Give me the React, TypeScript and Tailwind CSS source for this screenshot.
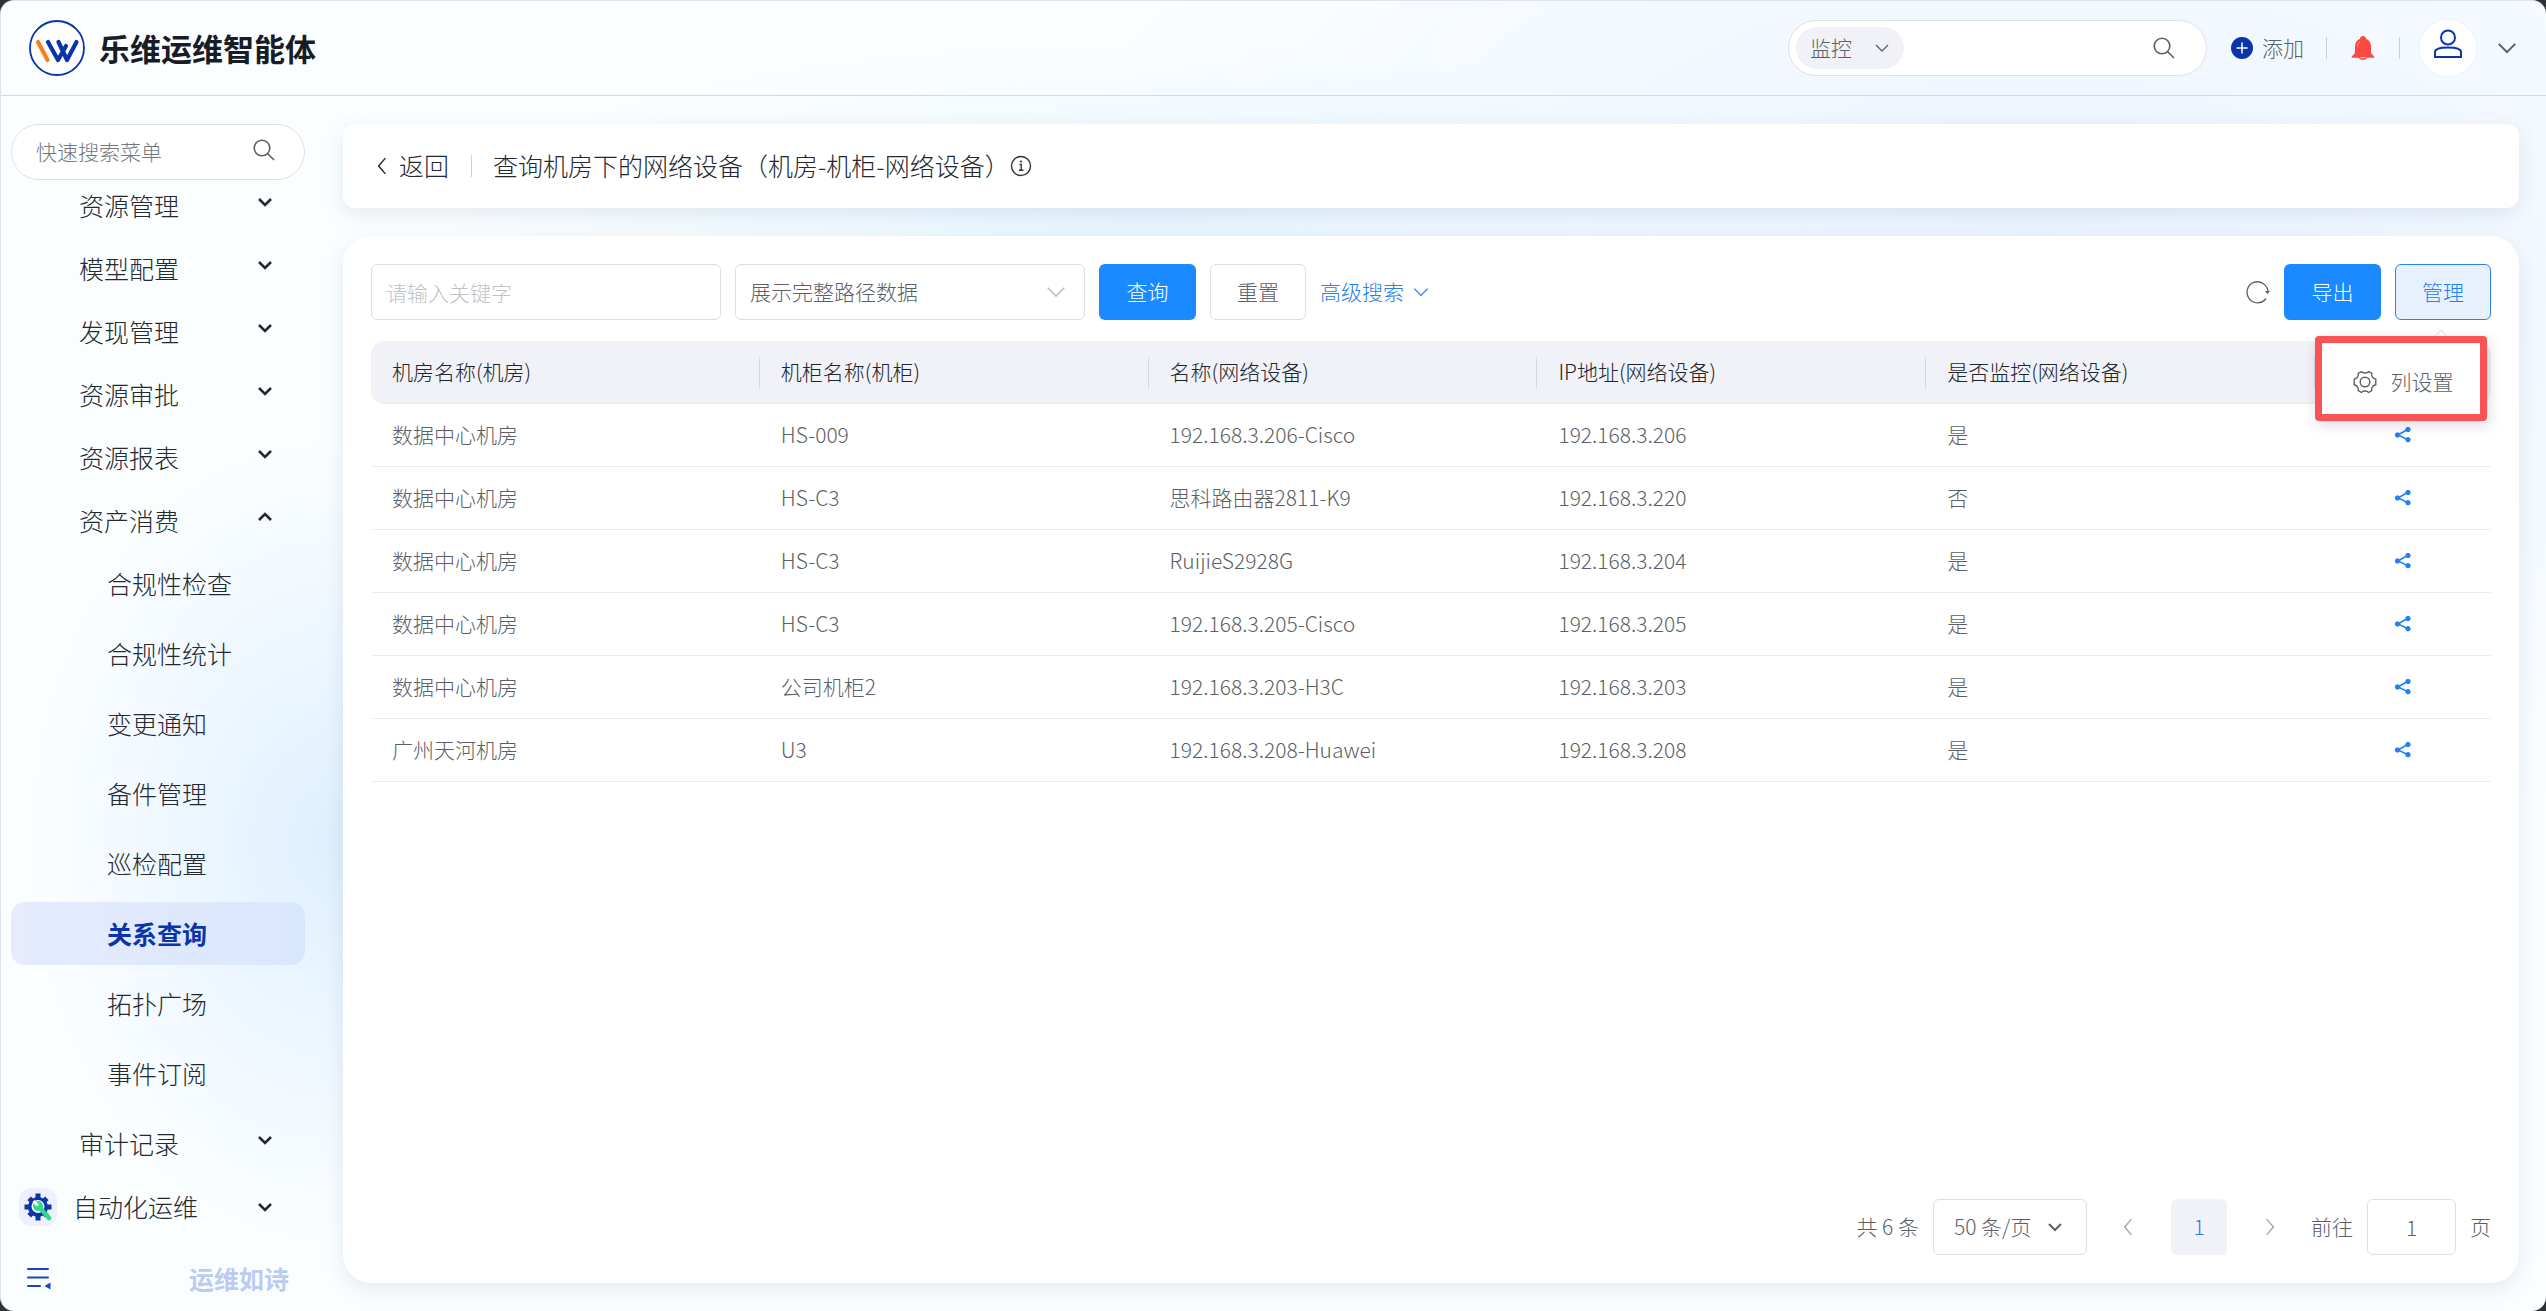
import { ReactNode } from "react";
import { clsx } from "clsx";

const menuGroups = ["资源管理", "模型配置", "发现管理", "资源审批", "资源报表"];

const assetMenu = [
  "合规性检查",
  "合规性统计",
  "变更通知",
  "备件管理",
  "巡检配置",
  "关系查询",
  "拓扑广场",
  "事件订阅",
];

const columns = [
  "机房名称(机房)",
  "机柜名称(机柜)",
  "名称(网络设备)",
  "IP地址(网络设备)",
  "是否监控(网络设备)",
];

const rows = [
  ["数据中心机房", "HS-009", "192.168.3.206-Cisco", "192.168.3.206", "是"],
  ["数据中心机房", "HS-C3", "思科路由器2811-K9", "192.168.3.220", "否"],
  ["数据中心机房", "HS-C3", "RuijieS2928G", "192.168.3.204", "是"],
  ["数据中心机房", "HS-C3", "192.168.3.205-Cisco", "192.168.3.205", "是"],
  ["数据中心机房", "公司机柜2", "192.168.3.203-H3C", "192.168.3.203", "是"],
  ["广州天河机房", "U3", "192.168.3.208-Huawei", "192.168.3.208", "是"],
];

interface ChevronProps {
  direction?: "down" | "up" | "left" | "right";
  className?: string;
  strokeWidth?: number;
}

const chevronPaths = {
  down: "M2 5l6 6 6-6",
  up: "M2 11l6-6 6 6",
  left: "M11 1L5 8l6 7",
  right: "M5 1l6 7-6 7",
};

const Chevron = ({
  direction = "down",
  className,
  strokeWidth = 1.5,
}: ChevronProps) => (
  <svg
    viewBox="0 0 16 16"
    fill="none"
    stroke="currentColor"
    strokeWidth={strokeWidth}
    className={clsx("shrink-0", className)}
  >
    <path d={chevronPaths[direction]} />
  </svg>
);

const SearchIcon = () => (
  <svg
    viewBox="0 0 24 24"
    fill="none"
    stroke="currentColor"
    strokeWidth="1.6"
    className="size-6"
  >
    <circle cx="10" cy="10" r="7.8" />
    <path d="M15.5 15.5L22 22" />
  </svg>
);

const Logo = () => (
  <svg viewBox="0 0 56 56" fill="none" className="size-14">
    <circle cx="28" cy="28" r="27" fill="#fff" stroke="#0a35a8" strokeWidth="1.8" />
    <g strokeWidth="4.2" strokeLinecap="round" strokeLinejoin="round">
      <path d="M9 22l9.500 18" stroke="#fb7f22" />
      <path d="M19 22l10 18L37 26M29.500 22l8.500 18L47.500 22" stroke="#0a35a8" />
    </g>
  </svg>
);

const BellIcon = () => (
  <svg viewBox="0 0 24 24" className="size-6">
    <path
      d="M12 0a3 3 0 0 1 3 2.700c3.400 1.200 5 4.300 5 8v5.300c0 1.500 1.200 2.300 2.500 3.700.8.900 1 2 1 2H.5s.2-1.100 1-2C2.800 18.300 4 17.500 4 16v-5.300c0-3.700 1.600-6.800 5-8A3 3 0 0 1 12 0z"
      fill="#fb4a40"
    />
    <path d="M8 21h8a4 3 0 0 1-8 0z" fill="#fb4a40" />
    <path d="M9.500 21.700h5" stroke="#fff" strokeWidth="0.900" />
    <path d="M6.700 10c.1-2 .9-3.200 2.400-4" fill="none" stroke="#fda49e" />
  </svg>
);

const UserIcon = () => (
  <svg
    viewBox="0 0 30 30"
    fill="none"
    stroke="#0a35a8"
    strokeWidth="2"
    className="mb-2 size-[30px]"
  >
    <circle cx="15" cy="8.500" r="7" />
    <path d="M2 28v-5c0-3.500 6-4.500 13-4.500s13 1 13 4.500v5z" />
  </svg>
);

const RefreshIcon = () => (
  <svg
    viewBox="0 0 24 24"
    fill="none"
    stroke="currentColor"
    strokeWidth="1.300"
    className="size-6"
  >
    <path d="M20 18.500A10.500 10.500 0 1 1 22 11.500" />
    <path d="M19 11h5l-2.500 3z" fill="currentColor" stroke="none" />
  </svg>
);

const InfoIcon = () => (
  <svg viewBox="0 0 22 22" fill="none" stroke="#303339" className="size-[22px]">
    <circle cx="11" cy="11" r="9.500" strokeWidth="1.400" />
    <path d="M9.500 9.500h1.700v5.500M9 15.300h4.500" strokeWidth="1.400" />
    <circle cx="11" cy="6.500" r="0.700" fill="#303339" />
  </svg>
);

const ShareIcon = () => (
  <svg viewBox="0 0 18 18" fill="#2080f5" stroke="#2080f5" className="size-[18px]">
    <path d="M13.500 3.500L4 9l9.500 4.500" fill="none" strokeWidth="1.500" />
    <circle cx="14" cy="3.500" r="2.200" />
    <circle cx="3.500" cy="9" r="2.200" />
    <circle cx="14" cy="13.700" r="2.200" />
  </svg>
);

const GearIcon = () => (
  <svg
    viewBox="0 0 24 24"
    fill="none"
    stroke="#5c5f66"
    strokeWidth="1.400"
    strokeLinejoin="round"
    className="size-6"
  >
    <path d="M8.500 1.500C9.500 3.500 14.500 3.500 15.500 1.500L18.800 3.400C18 5.600 19.800 8.800 22.800 9.300V14.700C19.800 15.200 18 18.400 18.800 20.600L15.500 22.500C14.500 20.500 9.500 20.500 8.500 22.500L5.200 20.600C6 18.400 4.200 15.200 1.200 14.700V9.300C4.200 8.800 6 5.600 5.200 3.400z" />
    <circle cx="12" cy="12" r="4.800" />
  </svg>
);

const AutomationIcon = () => (
  <span className="flex size-[38px] items-center justify-center rounded-xl bg-[#eef1fd]">
    <svg viewBox="0 0 28 28" className="size-7">
      <g fill="#0a35a8">
        <circle cx="14" cy="14" r="10" />
        <rect x="11.500" y="0.500" width="5" height="27" />
        <rect x="0.500" y="11.500" width="27" height="5" />
        <rect x="11.500" y="1.500" width="5" height="25" transform="rotate(45 14 14)" />
        <rect x="11.500" y="1.500" width="5" height="25" transform="rotate(-45 14 14)" />
      </g>
      <circle cx="14" cy="13.500" r="6.500" fill="#fff" />
      <path
        d="M16.500 15.500l8.500 9.500"
        stroke="#2edc86"
        strokeWidth="4.500"
        strokeLinecap="round"
      />
      <circle cx="14" cy="13" r="5" fill="#2edc86" />
      <path d="M9.500 8l4.500 4.500" stroke="#fff" strokeWidth="3" />
    </svg>
  </span>
);

const CollapseIcon = () => (
  <svg
    viewBox="0 0 24 24"
    fill="none"
    stroke="#1745c4"
    strokeWidth="2"
    strokeLinecap="round"
    className="size-6"
  >
    <path d="M1 3h20M1 11.500h20M1 20h12" />
    <path d="M23.500 16.500v7L17.500 20z" fill="#1745c4" stroke="none" />
  </svg>
);

const Header = () => (
  <header className="flex h-[95px] shrink-0 items-center justify-between border-b border-[#d3d9de] px-7">
    <div className="flex items-center gap-3.5">
      <Logo />
      <h1 className="text-[31px] font-bold text-[#171c26]">乐维运维智能体</h1>
    </div>
    <div className="flex items-center">
      <div className="flex h-14 w-[419px] items-center rounded-full border border-[#dfe1e5] bg-white pr-[30px] pl-[7px]">
        <div className="relative flex items-center">
          <select
            aria-label="搜索范围"
            className="h-[42px] w-[108px] appearance-none rounded-full bg-[#f0f2f7] pl-3.5 text-[#5c5f66]"
          >
            <option>监控</option>
          </select>
          <Chevron className="pointer-events-none absolute right-3.5 size-4" strokeWidth={1.3} />
        </div>
        <input aria-label="搜索" className="min-w-0 flex-1 bg-transparent px-3 outline-none" />
        <button type="button" aria-label="搜索按钮">
          <SearchIcon />
        </button>
      </div>
      <button type="button" className="ml-6 flex items-center gap-[9px]">
        <svg viewBox="0 0 22 22" className="size-[22px]">
          <circle cx="11" cy="11" r="11" fill="#0a35a8" />
          <path d="M5.500 11h11M11 5.500v11" stroke="#fff" strokeWidth="1.500" />
        </svg>
        添加
      </button>
      <span className="ml-[22px] h-[22px] w-px bg-[#cdd1d6]" />
      <button type="button" aria-label="告警" className="mx-6">
        <BellIcon />
      </button>
      <span className="h-[22px] w-px bg-[#cdd1d6]" />
      <button
        type="button"
        aria-label="用户"
        className="ml-5 flex size-14 items-center justify-center rounded-full bg-white shadow-[0_0_3px_#eef0f4]"
      >
        <UserIcon />
      </button>
      <Chevron className="ml-5 size-[22px]" strokeWidth={1.5} />
    </div>
  </header>
);

interface MenuRowProps {
  label: string;
  open?: boolean;
  icon?: ReactNode;
}

const MenuRow = ({ label, open, icon }: MenuRowProps) => (
  <li>
    <button
      type="button"
      className={clsx(
        "flex h-[63px] w-full items-center pr-8 text-[25px] text-[#24282f]",
        icon ? "gap-4 pl-2" : "pl-[68px]"
      )}
    >
      {icon}
      <span className="flex-1 text-left">{label}</span>
      <Chevron
        direction={open ? "up" : "down"}
        strokeWidth={2.6}
        className={clsx("size-4", !icon && "mb-2")}
      />
    </button>
  </li>
);

const Sidebar = () => (
  <aside className="flex w-[304px] shrink-0 flex-col pl-2.5">
    <div className="mt-7 flex h-14 shrink-0 items-center rounded-full border border-[#dfe1e5] bg-white pr-7 pl-6">
      <input
        aria-label="快速搜索菜单"
        placeholder="快速搜索菜单"
        className="min-w-0 flex-1 bg-transparent outline-none placeholder:text-[#75777b]"
      />
      <button type="button" aria-label="搜索菜单" className="mb-1">
        <SearchIcon />
      </button>
    </div>
    <nav className="-mt-1.5">
      <ul>
        {menuGroups.map((label) => (
          <MenuRow key={label} label={label} />
        ))}
        <MenuRow label="资产消费" open />
        {assetMenu.map((label) => (
          <li key={label} className="mb-[7px]">
            <a
              href="#"
              className={clsx(
                "flex h-[63px] items-center rounded-[14px] pl-24 text-[25px]",
                label === "关系查询"
                  ? "bg-linear-to-r from-[#e6ebfd] to-[#d9e7fe] font-bold text-[#0a35a8]"
                  : "text-[#24282f]"
              )}
            >
              {label}
            </a>
          </li>
        ))}
        <MenuRow label="审计记录" />
        <MenuRow label="自动化运维" icon={<AutomationIcon />} />
      </ul>
    </nav>
    <div className="mt-auto mb-3.5 flex items-center justify-between pr-4 pl-4">
      <button type="button" aria-label="收起菜单">
        <CollapseIcon />
      </button>
      <span className="text-[25px] font-bold text-[#bccbf2]">运维如诗</span>
    </div>
  </aside>
);

const Toolbar = () => (
  <div className="flex items-center">
    <input
      aria-label="关键字"
      placeholder="请输入关键字"
      className="h-14 w-[350px] rounded-md border border-[#dcdfe3] px-3.5 outline-none placeholder:text-[#bfc2c6]"
    />
    <div className="relative ml-3.5 flex items-center">
      <select
        aria-label="路径数据"
        className="h-14 w-[350px] appearance-none rounded-md border border-[#dcdfe3] bg-white px-3.5"
      >
        <option>展示完整路径数据</option>
      </select>
      <Chevron
        className="pointer-events-none absolute right-[18px] size-[22px] text-[#bfc2c6]"
        strokeWidth={1.2}
      />
    </div>
    <button type="button" className="ml-3.5 h-14 w-[97px] rounded-md bg-[#1b89ff] text-white">
      查询
    </button>
    <button type="button" className="ml-3.5 h-14 w-24 rounded-md border border-[#dcdfe3]">
      重置
    </button>
    <a href="#" className="ml-3.5 flex items-center gap-2 text-[#2580f0]">
      高级搜索
      <Chevron className="size-[18px]" strokeWidth={1.2} />
    </a>
    <button type="button" aria-label="刷新" className="ml-auto">
      <RefreshIcon />
    </button>
    <button type="button" className="ml-3.5 h-14 w-[97px] rounded-md bg-[#1b89ff] text-white">
      导出
    </button>
    <div className="relative ml-3.5">
      <button
        type="button"
        className="h-14 w-24 rounded-md border border-[#2d82e8] bg-[#e7f1fe] text-[#2580f0]"
      >
        管理
      </button>
      <div className="absolute top-[72px] right-1 z-10">
        <span className="absolute -top-1 right-10 size-3 rotate-45 border border-[#e2e4e8] bg-white" />
        <button
          type="button"
          className="relative flex h-[85px] w-[172px] items-center justify-center gap-3.5 rounded-sm border-[7px] border-[#fa5355] bg-white pt-1.5 pl-1 whitespace-nowrap shadow-[2px_4px_14px_rgba(0,0,0,0.150)]"
        >
          <GearIcon />
          列设置
        </button>
      </div>
    </div>
  </div>
);

const DeviceTable = () => (
  <table className="mt-[21px] w-full table-fixed border-separate border-spacing-0 text-left">
    <thead className="text-[#20242c]">
      <tr>
        {columns.map((column) => (
          <th
            key={column}
            className="relative h-[63px] border-b border-[#e9ebef] bg-[#f1f2f7] pl-[21px] font-light first:rounded-l-[14px]"
          >
            {column}
            <span className="absolute top-4 right-0 h-8 w-px bg-[#d5d8de]" />
          </th>
        ))}
        <th
          aria-label="操作"
          className="w-[176px] rounded-r-[14px] border-b border-[#e9ebef] bg-[#f1f2f7]"
        />
      </tr>
    </thead>
    <tbody>
      {rows.map((row) => (
        <tr key={row[3]}>
          {row.map((cell, index) => (
            <td key={index} className="h-[63px] border-b border-[#ebedf0] pl-[21px]">
              {cell}
            </td>
          ))}
          <td className="border-b border-[#ebedf0]">
            <button type="button" aria-label="查看关系" className="mx-auto block">
              <ShareIcon />
            </button>
          </td>
        </tr>
      ))}
    </tbody>
  </table>
);

const Pagination = () => (
  <div className="mt-auto flex items-center justify-end">
    <span>共 6 条</span>
    <div className="relative ml-3.5 flex items-center">
      <select
        aria-label="每页条数"
        className="h-14 w-[154px] appearance-none rounded-md border border-[#dcdfe3] bg-white pl-5"
      >
        <option>50 条/页</option>
      </select>
      <Chevron className="pointer-events-none absolute right-6 size-4" strokeWidth={2} />
    </div>
    <button type="button" aria-label="上一页" className="ml-8 text-[#a5a8ad]">
      <Chevron direction="left" className="size-[18px]" strokeWidth={1.3} />
    </button>
    <button type="button" className="ml-[34px] size-14 rounded-md bg-[#f1f2f7] text-[#2580f0]">
      1
    </button>
    <button type="button" aria-label="下一页" className="ml-[34px] text-[#a5a8ad]">
      <Chevron direction="right" className="size-[18px]" strokeWidth={1.3} />
    </button>
    <label className="ml-8 flex items-center gap-3.5">
      前往
      <input
        defaultValue="1"
        className="h-14 w-[89px] rounded-md border border-[#dcdfe3] text-center outline-none"
      />
      页
    </label>
  </div>
);

const App = () => {
  return (
    <div className="bg-[#303236]">
      <div
        className={clsx(
          "flex min-h-screen flex-col rounded-[14px] border-t border-l border-[#dfe3e6] text-[21px] font-light text-[#5c5f66]",
          "font-['Noto_Sans_CJK_SC',sans-serif]",
          "bg-[#fbfeff] bg-[radial-gradient(ellipse_300px_400px_at_330px_840px,#def0fe_0%,#eef7ff_50%,transparent_100%),radial-gradient(ellipse_1000px_600px_at_80%_22%,#eaf3ff_0%,transparent_100%),radial-gradient(ellipse_700px_180px_at_45%_17%,#e8f6ff_0%,transparent_100%)]"
        )}
      >
        <Header />
        <div className="flex flex-1">
          <Sidebar />
          <main className="flex min-w-0 flex-1 flex-col gap-7 pt-7 pr-[27px] pb-7 pl-[38px]">
            <div className="flex h-[84px] items-center rounded-xl bg-white pl-[30px] text-[25px] text-[#24282f] shadow-[0_6px_20px_rgba(60,80,120,0.120)]">
              <a href="#" className="flex items-center gap-2">
                <Chevron direction="left" className="size-[18px]" strokeWidth={1.3} />
                返回
              </a>
              <span className="ml-[22px] h-[22px] w-px bg-[#cdd1d6]" />
              <h2 className="ml-[21px]">查询机房下的网络设备（机房-机柜-网络设备）</h2>
              <InfoIcon />
            </div>
            <section className="flex flex-1 flex-col rounded-[28px] bg-white p-7 shadow-[0_6px_20px_rgba(60,80,120,0.120)]">
              <Toolbar />
              <DeviceTable />
              <Pagination />
            </section>
          </main>
        </div>
      </div>
    </div>
  );
};

export default App;
